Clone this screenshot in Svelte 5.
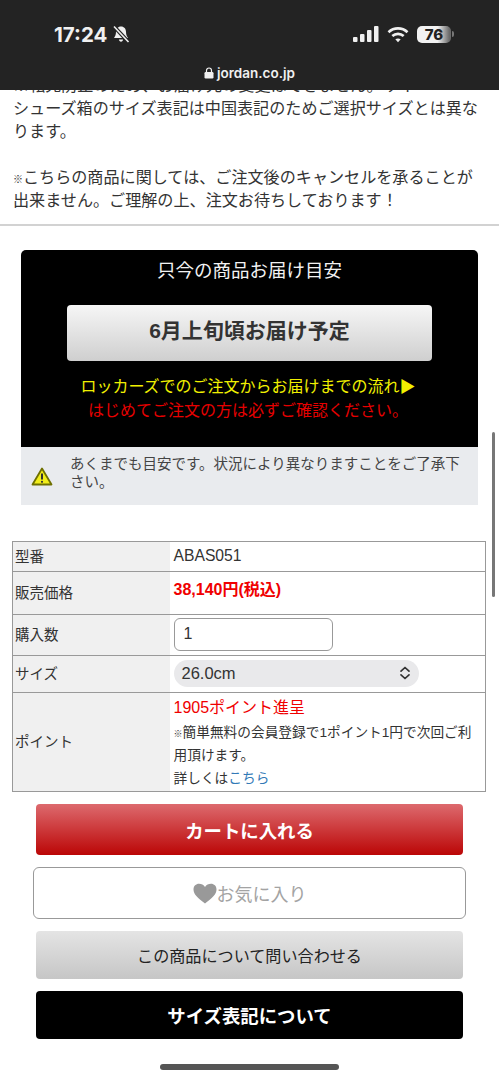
<script>
  const rows = [
    { label: "型番", value: "ABAS051" },
    { label: "販売価格", price: "38,140円(税込)" },
  ];
</script>

<div class="page">
  <header class="status">
    <div class="status-row">
      <div class="time">
        <span>17:24</span>
        <svg width="18" height="19" viewBox="0 0 18 19">
          <path d="M9 1.500c-3.200 0-4.900 2.400-5 5.300-.1 2.800-.6 4.400-2 6.200h14c-1.400-1.800-1.900-3.400-2-6.200-.1-2.900-1.800-5.300-5-5.300z" fill="#f0f0f0" />
          <path d="M7 14.500h4c0 1.300-.9 2.200-2 2.200s-2-.9-2-2.200z" fill="#f0f0f0" />
          <path d="M2 1.500 16.500 17" stroke="#232323" stroke-width="4" />
          <path d="M2 1.500 16.500 17" stroke="#f0f0f0" stroke-width="1.600" />
        </svg>
      </div>
      <div class="indicators">
        <svg width="26" height="17" viewBox="0 0 26 17" fill="#f0f0f0">
          <rect x="0" y="11" width="4.500" height="5" rx="1" />
          <rect x="7" y="8" width="4.500" height="8" rx="1" />
          <rect x="14" y="4" width="4.500" height="12" rx="1" />
          <rect x="21" y="0" width="4.500" height="16" rx="1" />
        </svg>
        <svg width="22" height="17" viewBox="0 0 22 17" fill="none" stroke="#f0f0f0" stroke-width="2.700">
          <path d="M1.500 6.200c5.400-5 13.600-5 19 0" />
          <path d="M5.300 10c3.300-2.900 8.100-2.900 11.400 0" />
          <path d="M11 16.200 8.300 13.300c1.600-1.200 3.800-1.200 5.400 0z" fill="#f0f0f0" stroke="none" />
        </svg>
        <div class="battery"><span>76</span></div>
        <div class="battery-cap"></div>
      </div>
    </div>
    <div class="url">
      <svg width="10" height="12" viewBox="0 0 10 12">
        <path d="M2.500 5V3.500a2.500 2.500 0 0 1 5 0V5" fill="none" stroke="#f0f0f0" stroke-width="1.200" />
        <rect x="0.500" y="5" width="9" height="6.500" rx="1.200" fill="#f0f0f0" />
      </svg>
      <span>jordan.co.jp</span>
    </div>
  </header>

  <section class="notice">
    <div class="clipped"><p>※転売防止のため、お届け先の変更はできません。サイ</p></div>
    <p>シューズ箱のサイズ表記は中国表記のためご選択サイズとは異なります。</p>
    <p class="gap"><span class="mark">※</span>こちらの商品に関しては、ご注文後のキャンセルを承ることが<br />出来ません。ご理解の上、注文お待ちしております！</p>
  </section>

  <section class="delivery">
    <div class="delivery-dark">
      <h2>只今の商品お届け目安</h2>
      <div class="estimate">6月上旬頃お届け予定</div>
      <p class="flow">ロッカーズでのご注文からお届けまでの流れ▶</p>
      <p class="check">はじめてご注文の方は必ずご確認ください。</p>
    </div>
    <div class="caution">
      <svg width="22" height="19" viewBox="0 0 22 19">
        <path d="M11 1.500 20.500 17.500H1.500z" fill="#f2ee1a" stroke="#6f7000" stroke-width="1.800" stroke-linejoin="round" />
        <path d="M11 6.500v6" stroke="#333" stroke-width="2" />
        <circle cx="11" cy="14.800" r="1.100" fill="#333" />
      </svg>
      <p>あくまでも目安です。状況により異なりますことをご了承下さい。</p>
    </div>
  </section>

  <table class="spec">
    <tbody>
      {#each rows as row}
        <tr class:price-row={row.price}>
          <th>{row.label}</th>
          <td>
            {#if row.price}
              <strong class="price">{row.price}</strong>
            {:else}
              {row.value}
            {/if}
          </td>
        </tr>
      {/each}
      <tr>
        <th>購入数</th>
        <td class="field"><div class="qty">1</div></td>
      </tr>
      <tr>
        <th>サイズ</th>
        <td class="field short">
          <div class="select">
            <span>26.0cm</span>
            <svg width="12" height="14" viewBox="0 0 12 14" fill="none" stroke="#333" stroke-width="1.700" stroke-linecap="round" stroke-linejoin="round">
              <path d="M2 5.200 6 1.500l4 3.700" />
              <path d="M2 8.800 6 12.500l4-3.700" />
            </svg>
          </div>
        </td>
      </tr>
      <tr>
        <th>ポイント</th>
        <td class="points">
          <div class="earned">1905ポイント進呈</div>
          <div class="small"><span class="mark small-mark">※</span>簡単無料の会員登録で1ポイント1円で次回ご利<br />用頂けます。</div>
          <div class="small">詳しくは<span class="link">こちら</span></div>
        </td>
      </tr>
    </tbody>
  </table>

  <div class="actions">
    <button class="btn cart">カートに入れる</button>
    <button class="btn fav">
      <svg width="24" height="21" viewBox="0 0 24 21">
        <path d="M12 20.500C5 15 .5 11.500.5 6.500.5 3 3 .8 6 .8c2.500 0 4.700 1.200 6 3.200C13.300 2 15.500.8 18 .8c3 0 5.500 2.200 5.500 5.700 0 5-4.500 8.500-11.500 14z" fill="#999" />
      </svg>
      <span>お気に入り</span>
    </button>
    <button class="btn ask">この商品について問い合わせる</button>
    <button class="btn size">サイズ表記について</button>
  </div>

  <div class="scrollbar"></div>
  <div class="home-bar"></div>
</div>

<style>
  :global(body) {
    margin: 0;
    background: #fff;
  }

  .page {
    position: relative;
    width: 499px;
    height: 1080px;
    overflow: hidden;
    font-family: "Liberation Sans", "Noto Sans CJK JP", sans-serif;
    color: #333;
  }

  p,
  h2 {
    margin: 0;
  }

  .status {
    height: 90px;
    background: #232323;
    color: #f0f0f0;
  }

  .status-row {
    display: flex;
    justify-content: space-between;
    align-items: center;
    height: 34px;
    padding: 17px 45px 0 54px;
  }

  .time {
    display: flex;
    align-items: center;
    gap: 5px;
    font-family: Inter, sans-serif;
    font-size: 20.500px;
    font-weight: 700;
  }

  .indicators {
    display: flex;
    align-items: center;
    gap: 8px;
  }

  .battery {
    width: 34px;
    height: 17px;
    border-radius: 5px;
    background: linear-gradient(90deg, #f2f2f2 60%, #6a6a6a 95%);
    color: #222;
    font-family: Inter, sans-serif;
    font-size: 15px;
    font-weight: 800;
    line-height: 17px;
    text-align: center;
  }

  .battery-cap {
    width: 2px;
    height: 6px;
    margin-left: -7px;
    border-radius: 0 2px 2px 0;
    background: #777;
  }

  .url {
    display: flex;
    justify-content: center;
    align-items: center;
    gap: 3px;
    margin-top: 14px;
    font-family: Inter, sans-serif;
    font-size: 13.500px;
    font-weight: 600;
  }

  .notice {
    padding: 0 13px 12px;
    border-bottom: 2px solid #d2d2d2;
    font-size: 16.100px;
    line-height: 23px;
    color: #333;
  }

  /* the line scrolled under the browser bar: only its bottom edge shows */
  .clipped {
    height: 7px;
    overflow: hidden;
  }

  .clipped p {
    margin-top: -16px;
    white-space: nowrap;
  }

  .gap {
    margin-top: 23px;
  }

  .mark {
    font-size: 10px;
    line-height: 1;
  }

  .small-mark {
    font-size: 9px;
  }

  .delivery {
    margin: 24px 21px 0;
  }

  .delivery-dark {
    height: 197px;
    padding-top: 1px;
    box-sizing: border-box;
    border-radius: 5px 5px 0 0;
    background: #000;
    text-align: center;
    font-size: 16px;
  }

  h2 {
    margin-top: 8px;
    font-size: 18.500px;
    font-weight: 400;
    line-height: 24px;
    color: #f2f2f2;
  }

  .estimate {
    height: 56px;
    margin: 22px 46px 14px;
    border-radius: 4px;
    background: linear-gradient(#f6f6f6, #cfcfcf);
    color: #333;
    font-size: 21px;
    font-weight: 700;
    line-height: 52px;
  }

  .flow {
    padding-right: 3px;
    color: #f0f000;
    line-height: 24px;
  }

  .check {
    padding-right: 3px;
    color: #e60000;
    line-height: 24px;
  }

  .caution {
    display: flex;
    align-items: center;
    gap: 17px;
    height: 58px;
    padding: 0 10px;
    background: #e9ebee;
    font-size: 14.500px;
    line-height: 18px;
    color: #444;
  }

  .caution svg {
    flex: none;
  }

  .caution p {
    margin-top: -6px;
  }

  .spec {
    width: 474px;
    margin: 36px 0 0 12px;
    border-collapse: collapse;
    font-size: 14.500px;
  }

  th,
  td {
    padding: 0 0 0 2px;
    border: 1px solid #999;
    border-width: 1px 0;
    text-align: left;
    font-weight: 400;
  }

  th {
    box-sizing: border-box;
    width: 157px;
    padding-bottom: 3px;
    border-left: 1px solid #999;
    background: #f0f0f0;
    color: #333;
  }

  td {
    padding-left: 4px;
    padding-bottom: 2px;
    border-right: 1px solid #999;
    font-size: 15.700px;
    height: 30px;
    box-sizing: border-box;
  }

  .price-row td {
    height: 43px;
    padding-bottom: 10px;
  }

  .price {
    color: #f00000;
    font-size: 16px;
  }

  .field {
    height: 41px;
  }

  .field.short {
    height: 37px;
  }

  .qty {
    box-sizing: border-box;
    width: 159px;
    height: 33px;
    padding-left: 9px;
    border: 1px solid #999;
    border-radius: 6px;
    font-size: 16px;
    line-height: 30px;
  }

  .select {
    display: flex;
    justify-content: space-between;
    align-items: center;
    box-sizing: border-box;
    width: 245px;
    height: 27px;
    padding: 0 8px;
    border-radius: 14px;
    background: #e9e9eb;
    font-size: 16.500px;
  }

  td.points {
    height: 99px;
    padding-top: 1px;
    padding-bottom: 1px;
  }

  .earned {
    color: #f00000;
    font-size: 16px;
    line-height: 26px;
  }

  .small {
    font-size: 13.700px;
    line-height: 23px;
    color: #333;
  }

  .link {
    color: #337ab7;
  }

  .actions {
    display: flex;
    flex-direction: column;
    align-items: center;
    gap: 12px;
    margin-top: 12px;
  }

  .btn {
    display: flex;
    justify-content: center;
    align-items: center;
    box-sizing: border-box;
    width: 427px;
    padding: 0;
    border: none;
    border-radius: 4px;
    font-family: inherit;
    font-size: 18.400px;
  }

  .cart {
    height: 51px;
    background: linear-gradient(#dd6a6e, #bb0606);
    color: #fff;
    font-weight: 700;
  }

  .fav {
    width: 433px;
    height: 52px;
    border: 1px solid #999;
    border-radius: 6px;
    background: #fff;
    color: #a3a3a3;
    font-size: 18px;
  }

  .ask {
    height: 48px;
    background: linear-gradient(#e4e4e4, #c6c6c6);
    color: #222;
    font-size: 16.100px;
  }

  .size {
    height: 48px;
    background: #000;
    color: #fff;
    font-weight: 700;
  }

  .scrollbar {
    position: absolute;
    top: 432px;
    left: 492px;
    width: 3px;
    height: 165px;
    border-radius: 2px;
    background: #777;
  }

  .home-bar {
    position: absolute;
    top: 1064px;
    left: 160px;
    width: 179px;
    height: 6px;
    border-radius: 3px;
    background: #555;
  }
</style>
